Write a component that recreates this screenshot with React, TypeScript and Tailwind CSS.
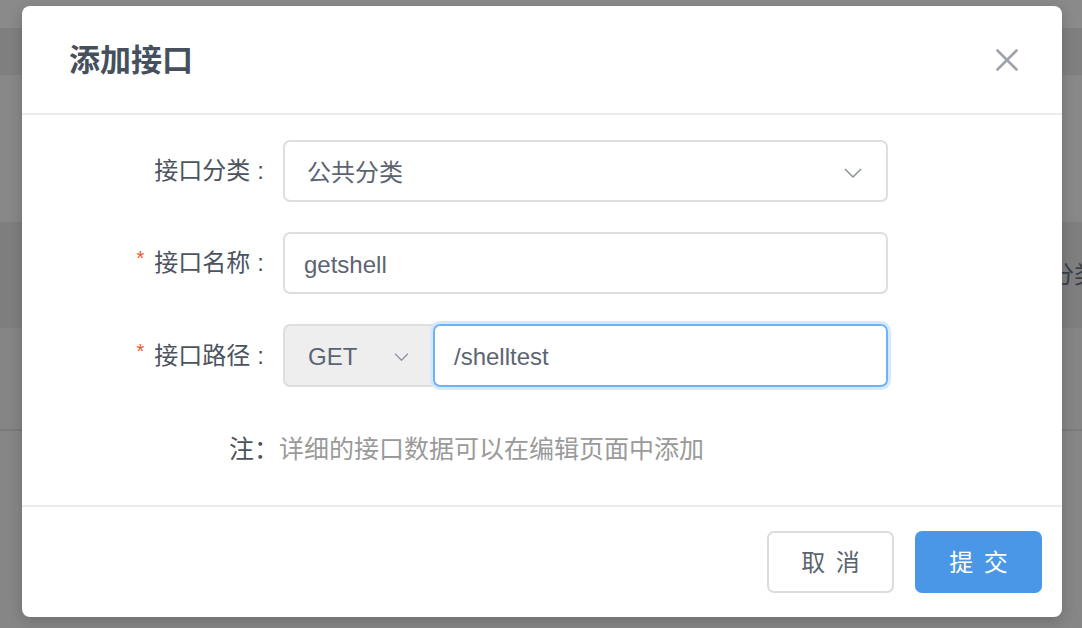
import { ReactNode } from "react";

const font = "font-['Liberation_Sans','Noto_Sans_CJK_SC',sans-serif]";

function Chevron({ w }: { w: number }) {
  return (
    <svg width={w} height={Math.round(w * 0.56)} viewBox="0 0 18 10" fill="none">
      <polyline points="1,1 9,9 17,1" stroke="#8d93a0" strokeWidth="1.6" strokeLinejoin="round" />
    </svg>
  );
}

function Label({ children, required }: { children: ReactNode; required?: boolean }) {
  return (
    <div className="flex w-[261px] shrink-0 items-center justify-end text-[24px] text-[#4b5361]">
      {required && <span className="mr-[10px] -mt-[10px] text-[20px] leading-none text-[#f0582a]">*</span>}
      <span>{children}</span>
      <span className="ml-[7px] mr-[19px]">:</span>
    </div>
  );
}

export default function App() {
  return (
    <div className={`relative h-[628px] w-[1082px] overflow-hidden bg-[#868686] ${font}`}>
      {/* page behind the dimmed overlay */}
      <div className="flex flex-col">
        <div className="h-[28px] bg-[#8a8a8a]" />
        <div className="h-[47px] bg-[#7f7f7f]" />
        <div className="h-[147px] bg-[#888888]" />
        <div className="flex h-[106px] items-center bg-[#7e7e7e] pl-[1002px] text-[24px] whitespace-nowrap text-[#3b4048]">
          公共分类
        </div>
        <div className="h-[103px] border-b-2 border-[#7a7a7a] bg-[#858585]" />
        <div className="h-[200px] bg-[#868686]" />
      </div>

      {/* modal */}
      <div className="absolute left-[22px] top-[6px] flex h-[611px] w-[1040px] flex-col rounded-[8px] bg-white shadow-[0_4px_14px_rgba(0,0,0,0.18)]">
        <div className="flex h-[109px] shrink-0 items-center justify-between border-b-2 border-[#ebebeb] pl-[47px] pr-[44px]">
          <span className="mt-[3px] text-[31px] font-semibold text-[#46505c]">添加接口</span>
          <svg width="22" height="22" viewBox="0 0 22 22" fill="none">
            <path d="M1.5 1.5 L20.5 20.5 M20.5 1.5 L1.5 20.5" stroke="#9ea3ad" strokeWidth="2.6" strokeLinecap="round" />
          </svg>
        </div>

        <div className="flex flex-1 flex-col pt-[25px]">
          <div className="flex flex-col gap-[30px]">
            <div className="flex h-[62px]">
              <Label>接口分类</Label>
              <div className="flex w-[605px] items-center justify-between rounded-[7px] border-2 border-[#dedede] pl-[22px] pr-[24px] pt-[3px] text-[24px] text-[#5c6473]">
                <span>公共分类</span>
                <Chevron w={18} />
              </div>
            </div>
            <div className="flex h-[62px]">
              <Label required>接口名称</Label>
              <div className="flex w-[605px] items-center rounded-[7px] border-2 border-[#dedede] pl-[19px] pt-[3px] text-[24px] text-[#5c6473]">
                getshell
              </div>
            </div>
            <div className="flex h-[63px]">
              <Label required>接口路径</Label>
              <div className="flex w-[605px]">
                <div className="flex w-[150px] shrink-0 items-center justify-between rounded-l-[7px] border-2 border-r-0 border-[#dedede] bg-[#eeeeee] pl-[23px] pr-[24px] pt-[3px] text-[24px] text-[#5c6473]">
                  <span>GET</span>
                  <Chevron w={15} />
                </div>
                <div className="flex flex-1 items-center rounded-[7px] border-2 border-[#6db3f6] pl-[19px] pt-[3px] text-[24px] text-[#5c6473] shadow-[0_0_0_3px_#d6e8fb]">
                  /shelltest
                </div>
              </div>
            </div>
          </div>
          <div className="mt-[45px] pl-[207px] text-[25px] leading-[34px] text-[#9a9a9a]">
            <span className="text-[#4b5361]">注：</span>详细的接口数据可以在编辑页面中添加
          </div>
        </div>

        <div className="flex h-[112px] shrink-0 items-center justify-end gap-[21px] border-t-2 border-[#ebebeb] pr-[20px]">
          <button className="flex h-[62px] w-[127px] items-center justify-center rounded-[7px] border-2 border-[#dcdcdc] bg-white pt-[2px] text-[24px] text-[#5c6473] [word-spacing:4px]">
            取 消
          </button>
          <button className="flex h-[62px] w-[127px] items-center justify-center rounded-[7px] bg-[#4a97e8] pt-[2px] text-[24px] text-white [word-spacing:4px]">
            提 交
          </button>
        </div>
      </div>
    </div>
  );
}
